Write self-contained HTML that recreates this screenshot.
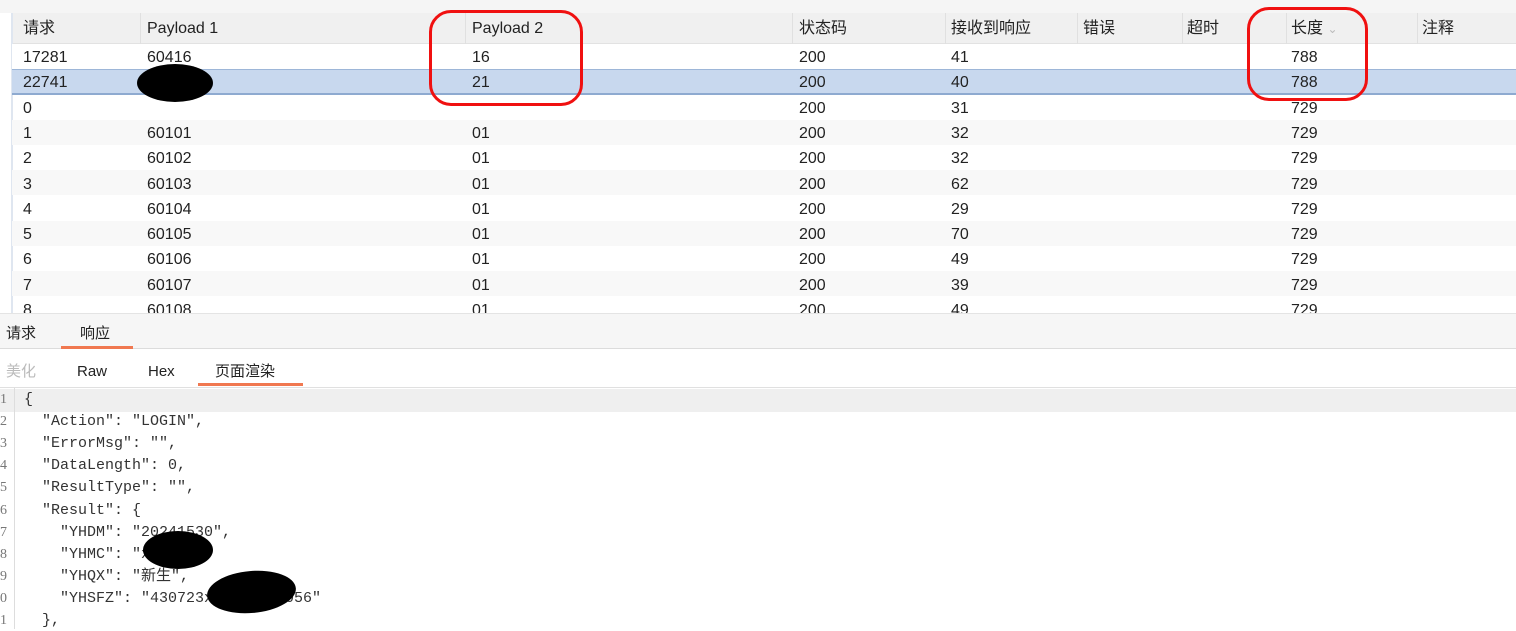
<!DOCTYPE html>
<html><head><meta charset="utf-8"><style>
*{margin:0;padding:0;box-sizing:border-box}
body{width:1516px;height:629px;overflow:hidden;background:#fff;font-family:"Liberation Sans","Noto Sans CJK SC",sans-serif;color:#222;position:relative}
.a{position:absolute}
.top{left:0;top:0;width:1516px;height:13px;background:#f5f5f5}
.hdr{left:11px;top:13px;width:1505px;height:31px;background:#f0f0f0;border-bottom:1px solid #e2e2e2}
.sep{top:13px;width:1px;height:31px;background:#e0e0e0}
.row{left:12px;width:1504px;height:25px}
.t{position:absolute;font-size:16px;white-space:nowrap;line-height:20px;height:20px}
.lb{left:11px;top:13px;width:2px;height:300px;background:#dfe6f0}
.code{font-family:"Liberation Mono","Noto Sans CJK SC",monospace;font-size:15px;color:#333;white-space:pre;line-height:20px;height:20px}
.ln{font-family:"Liberation Serif",serif;font-size:14px;color:#777;line-height:20px}
.blk{background:#000;border-radius:50%}
.red{border:3px solid #f01010;border-radius:22px}
#clip{position:absolute;left:0;top:0;width:1516px;height:313px;overflow:hidden}
</style></head><body>
<div class="a top"></div>
<div class="a hdr"></div>
<div class="a lb"></div>
<div class="a sep" style="left:140px"></div><div class="a sep" style="left:465px"></div><div class="a sep" style="left:792px"></div><div class="a sep" style="left:945px"></div><div class="a sep" style="left:1077px"></div><div class="a sep" style="left:1182px"></div><div class="a sep" style="left:1286px"></div><div class="a sep" style="left:1417px"></div>
<div class="t" style="left:23px;top:19px">请求</div>
<div class="t" style="left:147px;top:19px">Payload 1</div>
<div class="t" style="left:472px;top:19px">Payload 2</div>
<div class="t" style="left:799px;top:19px">状态码</div>
<div class="t" style="left:951px;top:19px">接收到响应</div>
<div class="t" style="left:1083px;top:19px">错误</div>
<div class="t" style="left:1187px;top:19px">超时</div>
<div class="t" style="left:1291px;top:19px">长度 <span style="color:#bbb;font-size:12px">&#8964;</span></div>
<div class="t" style="left:1422px;top:19px">注释</div>

<div class="a row" style="top:44px;background:#fff"></div>
<div class="a row" style="top:69px;height:26px;background:#c8d8ee;border-top:1px solid #9db6d8;border-bottom:2px solid #8eaad0"></div>
<div class="a row" style="top:120px;background:#f8f8f8"></div>
<div class="a row" style="top:170px;background:#f8f8f8"></div>
<div class="a row" style="top:221px;background:#f8f8f8"></div>
<div class="a row" style="top:271px;background:#f8f8f8"></div>

<div id="clip"></div>
<script>
var d=[["17281","60416","16","200","41","788"],["22741","","21","200","40","788"],["0","","","200","31","729"],["1","60101","01","200","32","729"],["2","60102","01","200","32","729"],["3","60103","01","200","62","729"],["4","60104","01","200","29","729"],["5","60105","01","200","70","729"],["6","60106","01","200","49","729"],["7","60107","01","200","39","729"],["8","60108","01","200","49","729"]];
var xs=[23,147,472,799,951,1291],h="";
d.forEach(function(r,i){var y=48+i*25.3;r.forEach(function(v,j){h+='<div class="t" style="left:'+xs[j]+'px;top:'+y+'px">'+v+'</div>'})});
document.getElementById('clip').innerHTML=h;
</script>

<div class="a" style="left:0;top:313px;width:1516px;height:36px;background:#f6f6f6;border-top:1px solid #e4e4e4;border-bottom:1px solid #dcdcdc"></div>
<div class="t" style="left:6px;top:324px;font-size:15px">请求</div>
<div class="t" style="left:80px;top:324px;font-size:15px">响应</div>
<div class="a" style="left:61px;top:346px;width:72px;height:3px;background:#f07850"></div>
<div class="t" style="left:6px;top:362px;font-size:15px;color:#bbb">美化</div>
<div class="t" style="left:77px;top:362px;font-size:15px">Raw</div>
<div class="t" style="left:148px;top:362px;font-size:15px">Hex</div>
<div class="t" style="left:215px;top:362px;font-size:15px">页面渲染</div>
<div class="a" style="left:198px;top:383px;width:105px;height:3px;background:#f07850"></div>
<div class="a" style="left:0;top:387px;width:1516px;height:1px;background:#e0e0e0"></div>
<div class="a" style="left:0;top:389px;width:1516px;height:23px;background:#efefef"></div>
<div class="a" style="left:14px;top:388px;width:1px;height:241px;background:#ddd"></div>
<div id="code"></div>
<script>
var c=['{','  "Action": "LOGIN",','  "ErrorMsg": "",','  "DataLength": 0,','  "ResultType": "",','  "Result": {','    "YHDM": "20241530",','    "YHMC": "xxxxx",','    "YHQX": "新生",','    "YHSFZ": "430723xxxxxxxx0056"','  },'],h2="";
c.forEach(function(s,i){var y=390+i*22.1;h2+='<div class="a ln" style="left:0;top:'+y+'px">'+((i+1)%10)+'</div><div class="a code" style="left:24px;top:'+y+'px">'+s.replace(/</g,"&lt;")+'</div>'});
document.getElementById('code').innerHTML=h2;
</script>

<div class="a blk" style="left:137px;top:64px;width:76px;height:38px"></div>
<div class="a blk" style="left:143px;top:531px;width:70px;height:38px"></div>
<div class="a blk" style="left:207px;top:571px;width:89px;height:42px;transform:rotate(-5deg)"></div>
<div class="a red" style="left:429px;top:10px;width:154px;height:96px"></div>
<div class="a red" style="left:1247px;top:7px;width:121px;height:94px"></div>
</body></html>
